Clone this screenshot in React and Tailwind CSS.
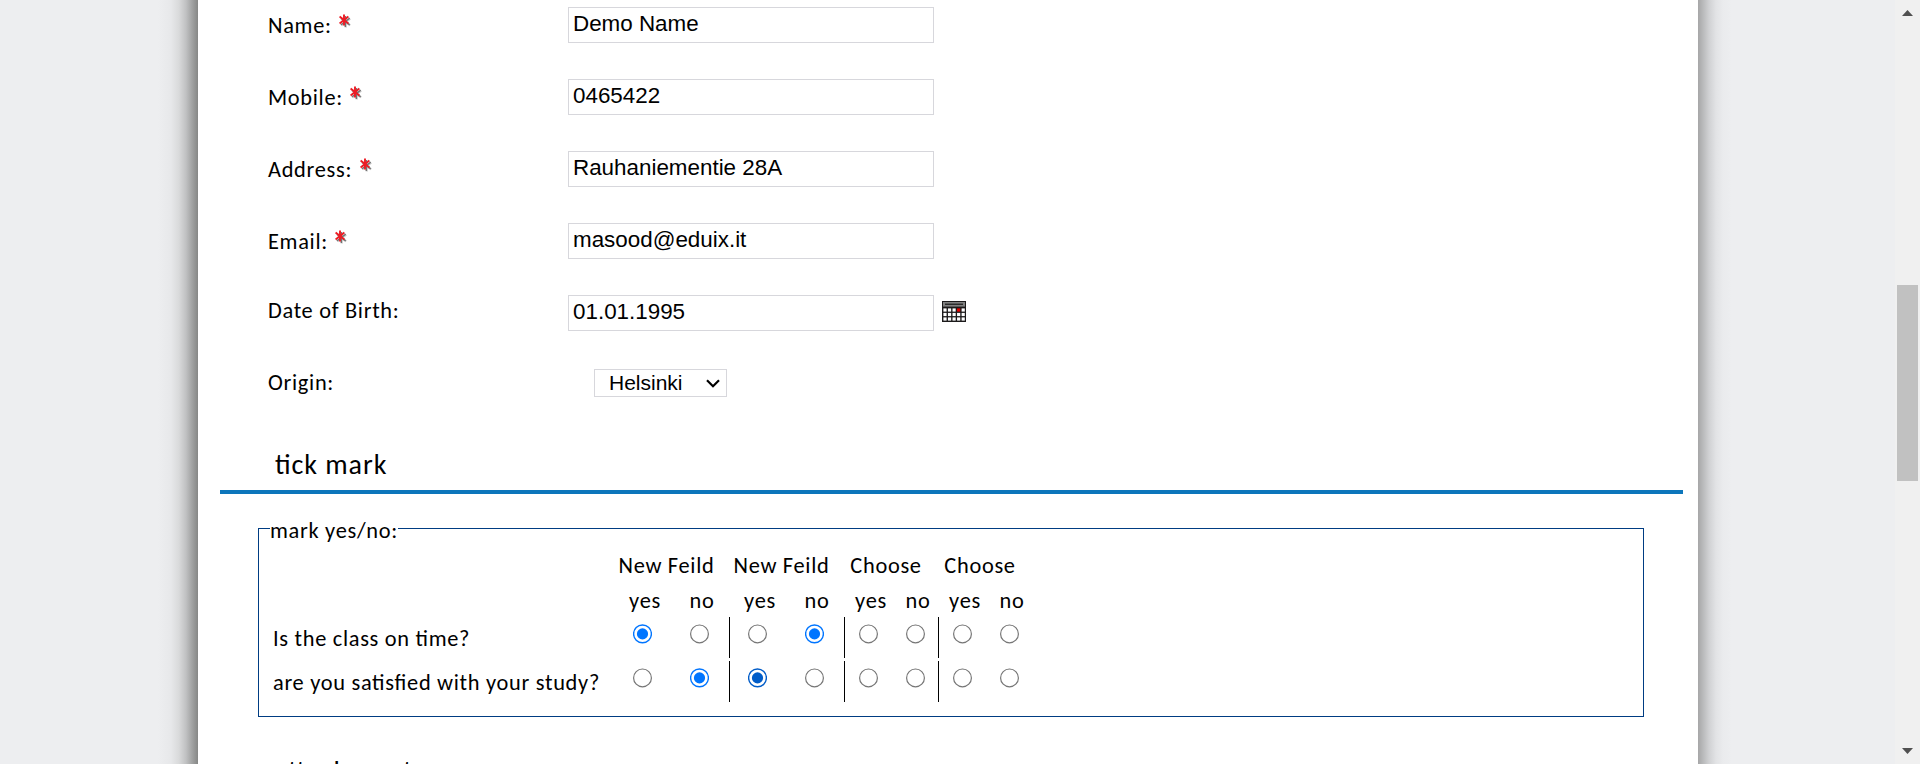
const FONT = "font-[Carlito,Calibri,Lato,sans-serif] [font-feature-settings:'liga'_1,'clig'_1] tracking-[0.69px]";
const INPUT_FONT = "font-['Liberation_Sans',sans-serif] tracking-normal";

const fields = [
  { label: "Name:", value: "Demo Name", required: true },
  { label: "Mobile:", value: "0465422", required: true },
  { label: "Address:", value: "Rauhaniementie 28A", required: true },
  { label: "Email:", value: "masood@eduix.it", required: true },
  { label: "Date of Birth:", value: "01.01.1995", calendar: true },
];

const groups = [
  { title: "New Feild", width: "w-[115px]", cell: "w-[57px]", inset: "pl-[18px]", shift: "" },
  { title: "New Feild", width: "w-[115px]", cell: "w-[57px]", inset: "pl-[18px]", shift: "" },
  { title: "Choose", width: "w-[94px]", cell: "w-[47px]", inset: "pl-[14px]", shift: "pl-px" },
  { title: "Choose", width: "w-[94px]", cell: "w-[47px]", inset: "pl-[14px]", shift: "pl-px" },
];

const questions = [
  { text: "Is the class on time?", picks: [0, 1, -1, -1] },
  { text: "are you satisfied with your study?", picks: [1, 0, -1, -1], hover: 1 },
];

function Asterisk() {
  const arms = "M6 0.6v10.8M1.6 2.6l8.8 6.8M1.6 9.4l8.8-6.8";
  return (
    <svg width="15" height="15" viewBox="0 0 15 15" className="mb-[8px] ml-[6.5px]" fill="none">
      <path d={arms} stroke="#444" strokeOpacity="0.25" strokeWidth="2.4" transform="translate(1.8 2)" />
      <path d={arms} stroke="#333" strokeOpacity="0.6" strokeWidth="1.4" transform="translate(1.3 1.5)" />
      <path d={arms} stroke="#ed1c24" strokeWidth="1.9" />
    </svg>
  );
}

function CalendarIcon() {
  const cells = [];
  for (let r = 0; r < 3; r++)
    for (let c = 0; c < 5; c++)
      cells.push(
        <rect key={`${r}-${c}`} x={1.4 + c * 4.55} y={7.4 + r * 4.5} width="3.2" height="3.2" fill={r === 0 && c === 3 ? "#e80000" : "#fff"} />
      );
  return (
    <svg width="24" height="21" viewBox="0 0 24 21" className="ml-2">
      <rect width="24" height="21" fill="#1c1a1b" />
      <rect x="1" y="1" width="22" height="4.6" fill="#808080" />
      <rect x="3" y="2.6" width="18" height="1.3" fill="#222" />
      {cells}
    </svg>
  );
}

function Radio({ on, dark }) {
  const color = dark ? "#005cc8" : "#0075ff";
  return (
    <svg width="19" height="20" viewBox="0 0 19 20" className="block">
      <circle cx="9.5" cy="9.9" r="8.9" fill="#fff" stroke={on ? color : "#767676"} strokeWidth={on ? 1.4 : 1.2} />
      {on && <circle cx="9.5" cy="9.9" r="5.6" fill={color} />}
    </svg>
  );
}

export default function App() {
  return (
    <div className={`flex h-[764px] w-[1920px] overflow-hidden bg-[#edeef0] text-black ${FONT} text-[22.4px]`}>
      <div className="flex w-[198px] justify-end">
        <div className="w-10 bg-[linear-gradient(to_left,#868786,#a0a1a1_14%,#c0c1c2_30%,#d9dadb_48%,#e7e8ea_68%,#edeef0)]" />
      </div>
      <main className="flex h-[764px] w-[1500px] shrink-0 flex-col overflow-hidden bg-white">
        <div className="h-[7px] shrink-0" />
        {fields.map((f) => (
          <div key={f.label} className="flex h-[72px] shrink-0 pl-[70px]">
            <div className={`flex h-9 w-[300px] items-center ${f.calendar ? "pb-[5px]" : "pt-px"}`}>
              {f.label}
              {f.required && <Asterisk />}
            </div>
            <div className={`flex h-9 w-[366px] items-center border border-[#d7d7dc] pb-[2px] pl-1 text-[22.4px] leading-none ${INPUT_FONT}`}>
              {f.value}
            </div>
            {f.calendar && (
              <div className="flex h-9 items-center pb-[3px]">
                <CalendarIcon />
              </div>
            )}
          </div>
        ))}
        <div className="flex h-[72px] shrink-0 pl-[70px]">
          <div className="flex h-9 w-[326px] items-center pb-[5px]">Origin:</div>
          <div className={`mt-[2px] flex h-7 w-[133px] items-center border border-[#d7d7dc] pl-[14px] text-[21px] ${INPUT_FONT}`}>
            Helsinki
            <svg width="14" height="9" viewBox="0 0 14 9" className="ml-[23px]" fill="none" stroke="#000" strokeWidth="2.2">
              <path d="M1 1.2l6 6 6-6" />
            </svg>
          </div>
        </div>
        <div className="ml-[22px] flex h-[55px] w-[1463px] shrink-0 items-end border-b-4 border-[#0d76bb] pb-[7px] pl-[55px] text-[28px] leading-[36px] tracking-[0.95px]">
          tick mark
        </div>
        <div className="h-[34px] shrink-0" />
        <fieldset className="relative ml-[60px] h-[189px] w-[1386px] shrink-0 border border-[#003c82]">
          <div className="absolute -top-3.5 left-[11px] h-8 bg-white leading-8">mark yes/no:</div>
          <div className="mt-[20px] flex h-[35px] pl-[350px]">
            {groups.map((g, i) => (
              <div key={i} className={`${g.width} shrink-0 text-center leading-[33px]`}>{g.title}</div>
            ))}
          </div>
          <div className="flex h-[33px] pl-[357.5px]">
            {groups.map((g, i) => (
              <div key={i} className={`${g.width} ${g.shift} flex shrink-0 leading-[33px]`}>
                <div className={`${g.cell} shrink-0 text-center`}>yes</div>
                <div className={`${g.cell} shrink-0 text-center`}>no</div>
              </div>
            ))}
          </div>
          {questions.map((q) => (
            <div key={q.text} className="flex h-11 pl-[14px]">
              <div className="w-[342px] shrink-0 leading-[44px]">{q.text}</div>
              {groups.map((g, i) => (
                <div key={i} className={`${g.width} flex h-[41px] shrink-0 ${i < 3 ? "border-r border-black" : ""}`}>
                  <div className={`${g.cell} ${g.inset} shrink-0 pt-[7px]`}><Radio on={q.picks[i] === 0} dark={q.hover === i} /></div>
                  <div className={`${g.cell} ${g.inset} shrink-0 pt-[7px]`}><Radio on={q.picks[i] === 1} /></div>
                </div>
              ))}
            </div>
          ))}
        </fieldset>
        <div className="mt-[37px] shrink-0 pl-[76px] text-[28px] leading-[36px] tracking-[0.95px]">attachment</div>
      </main>
      <div className="w-[197px] bg-[linear-gradient(to_right,#a6a6a7,#b9babb_5px,#d0d1d3_11px,#e2e3e5_18px,#eaebed_25px,#edeef0_34px)]" />
      <div className="flex w-[25px] flex-col items-center bg-[#f0f0f0]">
        <svg width="11" height="6" className="mt-[10px] shrink-0"><path d="M0 6L5.5 0 11 6z" fill="#505050" /></svg>
        <div className="mt-[269px] h-[196px] w-[21px] shrink-0 bg-[#c1c1c1]" />
        <svg width="11" height="6" className="mt-[267px] shrink-0"><path d="M0 0L5.5 6 11 0z" fill="#505050" /></svg>
      </div>
    </div>
  );
}
